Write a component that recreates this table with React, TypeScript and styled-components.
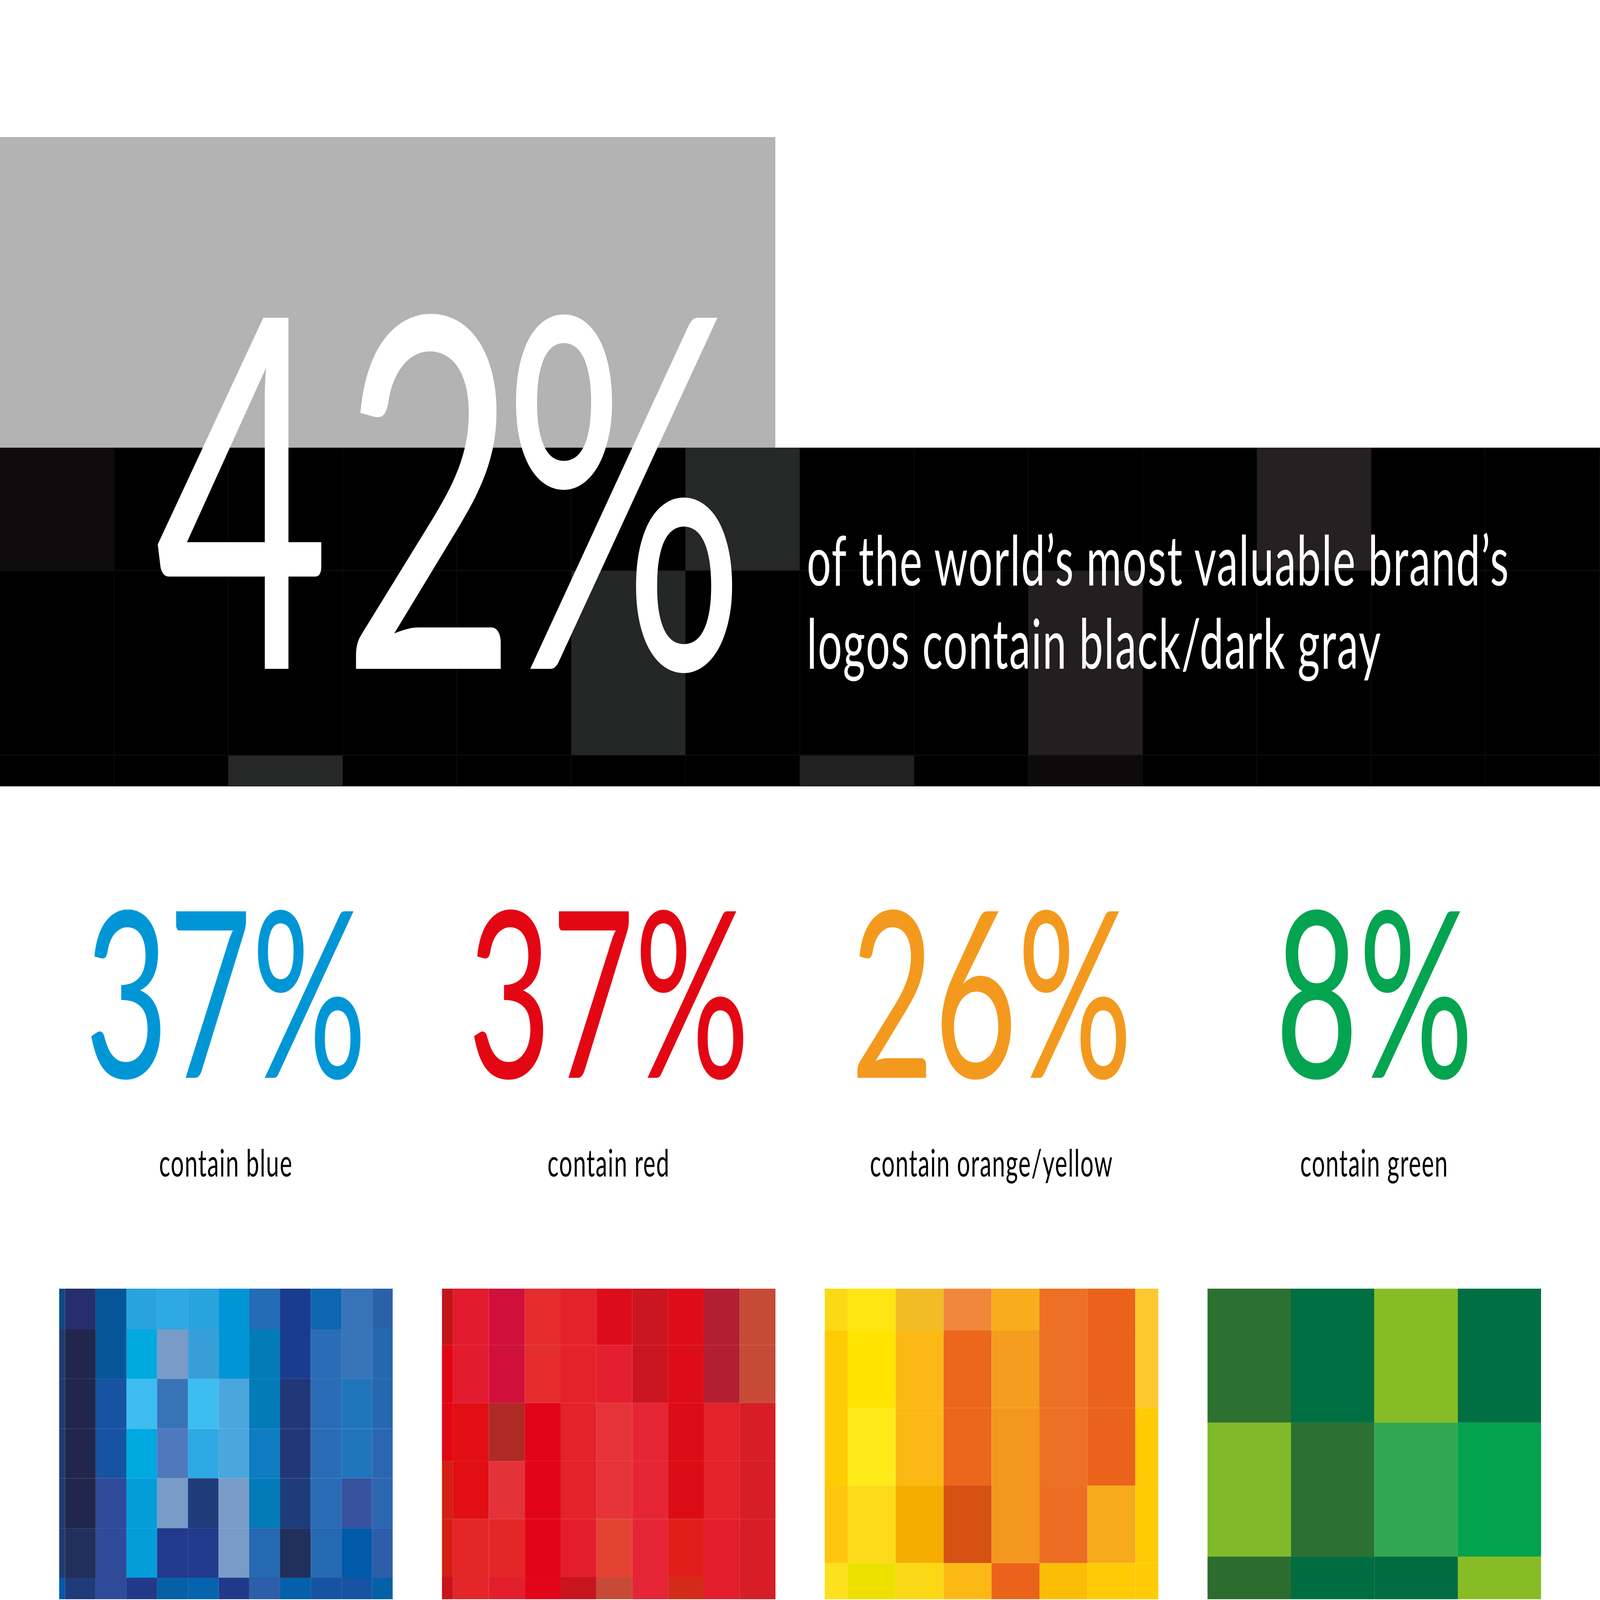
import styled, { createGlobalStyle } from "styled-components"

const DESIGN_W = 6742
const DESIGN_H = 4167

const GlobalStyle = createGlobalStyle`
  html, body {
    margin: 0;
    padding: 0;
    background: #ffffff;
    overflow: hidden;
  }
  * {
    box-sizing: border-box;
  }
`

const Viewport = styled.div`
  width: 100vw;
  height: 100vh;
  overflow: hidden;
  background: #ffffff;
`

const Page = styled.div`
  width: ${DESIGN_W}px;
  height: ${DESIGN_H}px;
  overflow: hidden;
  background: #ffffff;
  transform-origin: 0 0;
  font-family: Lato, "Liberation Sans", sans-serif;
`

const Hero = styled.section`
  position: relative;
  padding-top: 357px;
`

const GrayBlock = styled.div`
  width: 3267px;
  height: 809px;
  background: #b3b3b3;
`

const Band = styled.div`
  display: grid;
  height: 882px;
  background: #000000;
  overflow: hidden;
`

const BandCells = styled.div`
  grid-area: 1 / 1;
  display: grid;
  grid-template-columns: repeat(14, 1fr);
  grid-template-rows: 321px 481px 80px;
`

const BandCell = styled.div<{ $bg: string }>`
  background: ${(props) => props.$bg};
  border-right: 2px solid #141414;
  border-bottom: 2px solid #141414;
`

const BandText = styled.p`
  grid-area: 1 / 1;
  position: relative;
  margin: 0;
  padding: 181px 0 0 3400px;
  color: #ffffff;
  font-size: 180px;
  line-height: 217px;
  font-weight: 400;
  letter-spacing: 4px;
  white-space: nowrap;
`

const BigNumber = styled.div`
  position: absolute;
  left: 650px;
  top: 611px;
  color: #ffffff;
  font-size: 1276px;
  line-height: 1;
  font-weight: 400;
  white-space: nowrap;
`

const Digit = styled.span<{ $space: number }>`
  letter-spacing: ${(props) => props.$space}px;
`

const Stats = styled.section`
  display: grid;
  grid-template-columns: repeat(4, 1406px);
  column-gap: 207px;
  padding: 223px 249px 0;
`

const Stat = styled.div`
  display: flex;
  flex-direction: column;
  align-items: center;
`

const Percent = styled.div<{ $color: string }>`
  color: ${(props) => props.$color};
  font-size: 605px;
  line-height: 1;
  height: 605px;
  white-space: nowrap;
`

const Label = styled.div`
  margin-top: 101px;
  color: #000000;
  font-size: 98px;
  line-height: 1;
  height: 98px;
  letter-spacing: 3px;
  white-space: nowrap;
`

const Swatch = styled.div<{ $cols: string; $rows: string }>`
  align-self: stretch;
  margin-top: 281px;
  height: 809px;
  display: grid;
  grid-template-columns: ${(props) => props.$cols};
  grid-template-rows: ${(props) => props.$rows};
  overflow: hidden;
`

const Cell = styled.div<{ $bg: string }>`
  background: ${(props) => props.$bg};
`

const K = "#000000"

const bandRows = [
  ["#0e0c0d", K, K, K, K, K, "#262727", K, K, K, K, "#252122", K, K],
  [K, K, K, K, K, "#252626", K, K, K, "#231f20", K, K, K, K],
  [K, K, "#262727", K, K, K, K, "#222121", K, "#0c0a0b", K, K, K, K],
]

const blueRows = [
  ["#0b4b84", "#272e6d", "#055598", "#29a3de", "#2ea8e2", "#29a3de", "#0096d5", "#236cb6", "#1a3c8f", "#0d66b0", "#3873b8", "#2a62aa"],
  ["#1f3a72", "#20264c", "#055598", "#00a9e0", "#789bc8", "#379ed8", "#0096d5", "#027bb8", "#1a3c8f", "#2a6cb6", "#3873b8", "#2568ae"],
  ["#1f3a72", "#20264c", "#1653a2", "#3dbdef", "#3873b8", "#3dbdef", "#4aa6dd", "#027bb8", "#223777", "#2a6cb6", "#2175bb", "#2568ae"],
  ["#1f3a72", "#20264c", "#1653a2", "#00a9e0", "#5078bc", "#2ea8e2", "#4aa6dd", "#0f7bc0", "#223777", "#2a6cb6", "#2175bb", "#2d66b0"],
  ["#1f3a72", "#20264c", "#2e4a99", "#029dd9", "#789bc8", "#1f3c7a", "#789bc8", "#027bb8", "#1f3c7a", "#2a6cb6", "#37529f", "#2d66b0"],
  ["#1f3a72", "#21305b", "#2e4a99", "#029dd9", "#223a8b", "#223a8b", "#789bc8", "#2569b0", "#212f5c", "#2569b0", "#005aa9", "#2d5ea9"],
  ["#0059a8", "#1f3a78", "#2e4a99", "#22398a", "#0560a6", "#0763ae", "#22398a", "#2d5ea9", "#0560ab", "#1653a2", "#1653a2", "#0560a6"],
]

const redRows = [
  ["#c0161a", "#e31b2f", "#d0103a", "#e52d2d", "#e42229", "#dd0c1a", "#cb1520", "#de0c19", "#b21f33", "#c64a35"],
  ["#e20613", "#e31b2f", "#d0103a", "#e52d2d", "#e42229", "#e31f30", "#cb1520", "#de0c19", "#b21f33", "#c64a35"],
  ["#e20613", "#e10f13", "#ae2a25", "#e20518", "#e42229", "#e53338", "#e52535", "#db0c15", "#e42229", "#d71d25"],
  ["#d42012", "#e10f13", "#e33238", "#e20518", "#e42229", "#e53338", "#e52535", "#db0c15", "#e42229", "#d71d25"],
  ["#d42012", "#e42629", "#e42629", "#e20518", "#e21e2d", "#e44233", "#e52535", "#e11d1a", "#e21e2d", "#d71d25"],
  ["#c8141b", "#e42629", "#e21e2d", "#e20518", "#c8141f", "#c64a35", "#e52535", "#d42a1a", "#e21e2d", "#d71d25"],
]

const orangeRows = [
  ["#fbd915", "#ffe512", "#f2bc26", "#f0873a", "#f9ad1c", "#ee7025", "#eb631b", "#fec82f"],
  ["#ffcb05", "#ffe500", "#fcb814", "#ec661c", "#f59d1e", "#ee7025", "#eb631b", "#fec82f"],
  ["#ffcb05", "#ffeb1a", "#fcb814", "#ec661c", "#f4971e", "#ee7025", "#eb631b", "#ffcb05"],
  ["#fec60e", "#fcdc1a", "#f5ae00", "#d65213", "#f4971e", "#ed6d25", "#f6aa1c", "#ffcb05"],
  ["#fde01e", "#eee100", "#fbd815", "#fcb814", "#eb631b", "#fbbd05", "#ffcb05", "#ffcb05"],
]

const greenRows = [
  ["#2c7131", "#006f42", "#88bc26", "#007043"],
  ["#80b929", "#2c7131", "#32a753", "#03a24e"],
  ["#2c6c2f", "#006d41", "#006c40", "#88bc26"],
]

const stats = [
  {
    value: "37%",
    label: "contain blue",
    color: "#0096d6",
    cols: "25px repeat(10, 129.4px) 1fr",
    rows: "106px repeat(5, 129.4px) 1fr",
    cells: blueRows,
  },
  {
    value: "37%",
    label: "contain red",
    color: "#e30613",
    cols: "47px repeat(9, 151px)",
    rows: "147px repeat(4, 151px) 1fr",
    cells: redRows,
  },
  {
    value: "26%",
    label: "contain orange/yellow",
    color: "#f39a1e",
    cols: "97px repeat(6, 202px) 1fr",
    rows: "109px repeat(3, 202px) 1fr",
    cells: orangeRows,
  },
  {
    value: "8%",
    label: "contain green",
    color: "#04a451",
    cols: "repeat(4, 1fr)",
    rows: "349px 349px 1fr",
    cells: greenRows,
  },
]

// the window may come up smaller than the design; fit the design to it
function fitScale() {
  if (typeof window === "undefined") return "none"
  const sx = window.innerWidth / DESIGN_W
  const sy = window.innerHeight / DESIGN_H
  return `scale(${sx}, ${sy})`
}

function App() {
  return (
    <Viewport>
      <GlobalStyle />
      <Page style={{ transform: fitScale() }}>
        <Hero>
          <GrayBlock />
          <Band>
            <BandCells>
              {bandRows.flatMap((row, r) =>
                row.map((bg, c) => <BandCell key={`${r}-${c}`} $bg={bg} />)
              )}
            </BandCells>
            <BandText>
              of the world’s most valuable brand’s
              <br />
              logos contain black/dark gray
            </BandText>
          </Band>
          <BigNumber>
            <Digit $space={50}>4</Digit>
            <Digit $space={-62}>2</Digit>
            <Digit $space={0}>%</Digit>
          </BigNumber>
        </Hero>
        <Stats>
          {stats.map((stat) => (
            <Stat key={stat.label}>
              <Percent $color={stat.color}>{stat.value}</Percent>
              <Label>{stat.label}</Label>
              <Swatch $cols={stat.cols} $rows={stat.rows}>
                {stat.cells.flatMap((row, r) =>
                  row.map((bg, c) => <Cell key={`${r}-${c}`} $bg={bg} />)
                )}
              </Swatch>
            </Stat>
          ))}
        </Stats>
      </Page>
    </Viewport>
  )
}

export default App
